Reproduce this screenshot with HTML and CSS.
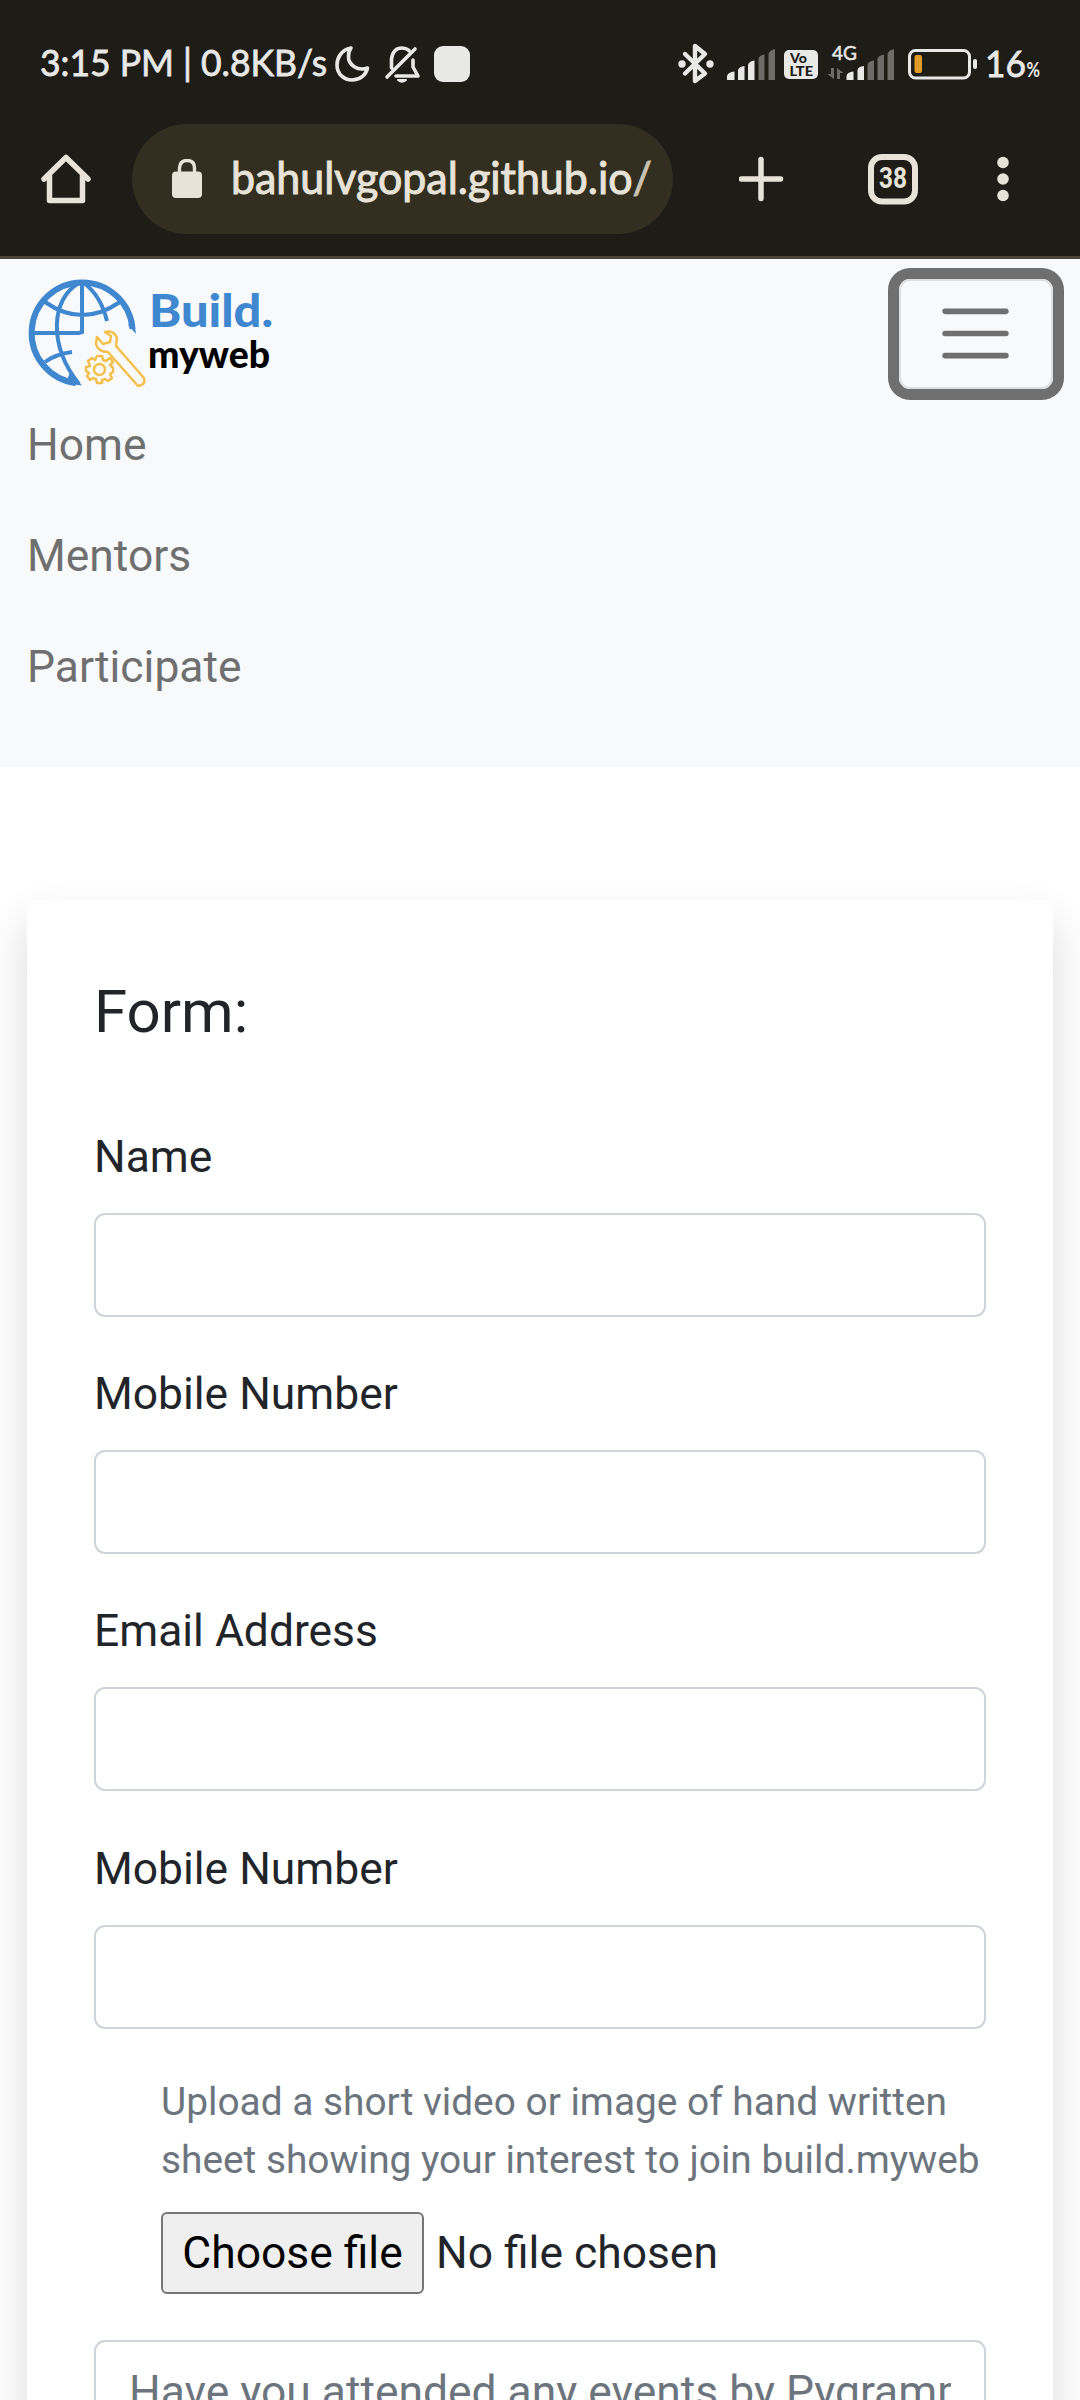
FILE: index.html
```html
<!DOCTYPE html>
<html lang="en">
<head>
<meta charset="utf-8">
<title>Build.myweb</title>
<link rel="stylesheet" href="styles.css">
</head>
<body>
<div class="chrome">
  <div class="status">
    <svg class="clock" width="290" height="50" viewBox="0 0 290 50">
      <text x="0" y="37" textLength="287" lengthAdjust="spacingAndGlyphs">3:15 PM | 0.8KB/s</text>
    </svg>
    <svg class="status-left" width="136" height="40" viewBox="335 44 136 40" fill="none" stroke="#e8e8e6" stroke-width="3.6" stroke-linejoin="round" stroke-linecap="round">
      <path d="M351 48C341 50 337 58 337 65C337 74 344 80 352 80C360 80 366 75 367.500 68C358 71.500 348 65 348.500 56Q348.500 51 351 48Z"/>
      <path d="M387 77L415 49M391.500 68V59Q393 48 402 48Q406 48 409 50.500M413 60V67L418 76H396" />
      <path d="M398 80H406Q402 83.500 398 80Z" stroke-width="2" fill="#e8e8e6"/>
      <rect x="434" y="46" width="36" height="36" rx="9" fill="#e8e8e6" stroke="none"/>
    </svg>
    <svg class="status-right" width="366" height="42" viewBox="678 43 366 42" fill="#e8e8e6">
      <path d="M685 54L705 73.500L695 81V46L705 54L685 73.500" fill="none" stroke="#e8e8e6" stroke-width="4.400" stroke-linejoin="round" stroke-linecap="round"/>
      <circle cx="682" cy="64" r="3.700"/><circle cx="710" cy="64" r="3.700"/>
      <path d="M727 76Q728 72 734.500 71.500V80H727ZM738 70Q739 66.500 744.500 66V80H738ZM748 65Q749 61 754.500 60.500V80H748Z"/>
      <path d="M758.500 59Q759 55.500 764.500 54.500V80H758.500ZM768.500 54Q769 50.500 775 49V80H768.500Z" fill="#6d6c68"/>
      <rect x="784" y="50" width="34" height="29" rx="5"/>
      <text class="volte" x="790" y="63" textLength="17" lengthAdjust="spacingAndGlyphs">Vo</text>
      <text class="volte" x="789.500" y="76" textLength="23.500" lengthAdjust="spacingAndGlyphs">LTE</text>
      <text class="net" x="832" y="60" textLength="25" lengthAdjust="spacingAndGlyphs">4G</text>
      <path d="M834 68V79L827.500 74H831V68ZM837 79V68L843.500 73H840V79Z" fill="#6d6c68"/>
      <path d="M846.500 76Q847 72 853.500 71.500V80H846.500ZM857.500 70Q858 66.500 864 66V80H857.500Z"/>
      <path d="M867.500 65Q868 61 874 60.500V80H867.500ZM877.500 59Q878 55.500 884 54.500V80H877.500ZM887.500 54Q888 50.500 894 49V80H887.500Z" fill="#6d6c68"/>
      <rect x="909.500" y="50.500" width="60" height="27.500" rx="6" fill="none" stroke="#e8e8e6" stroke-width="3"/>
      <rect x="914.500" y="55" width="7.500" height="18" rx="2" fill="#e09c26"/>
      <rect x="973" y="59" width="4" height="10" rx="2"/>
      <text class="pct" x="985" y="77" textLength="41" lengthAdjust="spacingAndGlyphs">16</text>
      <text class="pct-sign" x="1026.500" y="77" textLength="13.500" lengthAdjust="spacingAndGlyphs">%</text>
    </svg>
  </div>
  <div class="toolbar">
    <svg class="home" width="50" height="52" viewBox="41 153 50 52" fill="none" stroke="#e8e3d8" stroke-width="5.500" stroke-linecap="round" stroke-linejoin="round">
      <path d="M44 179L66 157.500L88 179M49.500 176V200.500H82.500V176"/>
    </svg>
    <div class="url">
      <svg width="30" height="40" viewBox="172 159 30 40">
        <rect x="172" y="171.500" width="30" height="26.500" rx="4" fill="#e8e3d8"/>
        <path d="M179.500 173V168Q180 160.500 187 160.500Q194.500 160.500 194.500 168V173" fill="none" stroke="#e8e3d8" stroke-width="3.400"/>
      </svg>
      <svg class="address" width="424" height="64" viewBox="0 0 424 64">
        <text x="0" y="47" textLength="421" lengthAdjust="spacingAndGlyphs">bahulvgopal.github.io<tspan class="slash">/</tspan></text>
      </svg>
    </div>
    <svg class="actions" width="270" height="52" viewBox="739 153 270 52" fill="none" stroke="#e8e3d8" stroke-width="5.500" stroke-linecap="round">
      <path d="M741.500 179H780.500M761 159.500V198.500"/>
      <rect x="871" y="157" width="44" height="44.500" rx="11" stroke-width="6"/>
      <text class="tabs" x="879" y="188" textLength="28" lengthAdjust="spacingAndGlyphs">38</text>
      <g fill="#e8e3d8" stroke="none"><circle cx="1003" cy="162.500" r="5.800"/><circle cx="1003" cy="179" r="5.800"/><circle cx="1003" cy="195.500" r="5.800"/></g>
    </svg>
  </div>
</div>
<nav class="navbar">
  <div class="brand-row">
    <svg class="logo" width="250" height="112" viewBox="27 277 250 112">
      <g fill="none" stroke="#3f87cf">
        <path d="M132.500 329A50.500 50.500 0 1 0 76 383" stroke-width="6"/>
        <path d="M82 283V332L79 333H33M79 283C51 299 48 345 79 384M84 283Q101 296 107 321M45 302Q82 328 120 302M45 362Q56 354 72 352" stroke-width="4"/>
        <path d="M128 325L136 334L134 320ZM70 372L82 385.500L66 383Z" fill="#3f87cf" stroke="none"/>
      </g>
      <g fill="none" stroke="#f3c04b" stroke-width="2.500" stroke-linejoin="round">
        <path d="M105 332Q114 330 117 338L116 346L144 378Q146 385 138 386L108 352Q98 352 96 344L97 337L103 344L110 342L111 336Z"/>
        <circle cx="99.500" cy="369.500" r="5.500"/>
        <path d="M97 356H102L103 360L106 361L110 358L113 362L110 365L113 368V372L110 374L112 378L108 381L105 379L102 380V383H97L96 379L93 378L90 380L87 376L89 373L86 371V367L90 366L88 361L92 358L95 360Z"/>
      </g>
      <text class="build" x="149" y="327" textLength="124" lengthAdjust="spacingAndGlyphs">Build.</text>
      <text class="myweb" x="148" y="368" textLength="122" lengthAdjust="spacingAndGlyphs">myweb</text>
    </svg>
    <button class="toggler" aria-label="Toggle navigation">
      <svg width="83" height="83" viewBox="0 0 30 30"><path d="M4 7h22M4 15h22M4 23h22" stroke="#6f6f6f" stroke-width="2" stroke-linecap="round"/></svg>
    </button>
  </div>
  <ul class="links"><li>Home</li><li>Mentors</li><li>Participate</li></ul>
</nav>
<main class="card">
  <h1>Form:</h1>
  <label class="field"><span>Name</span><input type="text"></label>
  <label class="field"><span>Mobile Number</span><input type="text"></label>
  <label class="field"><span>Email Address</span><input type="text"></label>
  <label class="field"><span>Mobile Number</span><input type="text"></label>
  <div class="upload">
    <p>Upload a short video or image of hand written<br>sheet showing your interest to join build.myweb</p>
    <div class="file"><button>Choose file</button><span>No file chosen</span></div>
  </div>
  <input class="last" type="text" placeholder="Have you attended any events by Pygrammers">
</main>
</body>
</html>
```
FILE: styles.css
```css
* { box-sizing: border-box; }
body {
  display: flex;
  flex-direction: column;
  margin: 0;
  height: 2400px;
  overflow: hidden;
  background: #fff;
  color: #212529;
  font: 44.4px/66px Roboto, sans-serif;
}
svg { display: block; flex: none; }
.chrome {
  flex: none;
  height: 259px;
  background: #1d1c17;
  border-bottom: 3px solid #4a463a;
}
.status {
  display: flex;
  align-items: center;
  height: 124px;
  padding: 4px 36px 0 40px;
}
.clock { margin-right: 5px; }
.clock text {
  font: 37px Lato, sans-serif;
  fill: #e8e8e6;
  stroke: #e8e8e6;
  stroke-width: .8px;
}
.status-right { margin-left: auto; }
.volte { font: 900 14px Lato, sans-serif; fill: #1d1c17; }
.net { font: 20px Lato, sans-serif; stroke: #e8e8e6; stroke-width: .5px; }
.pct { font: 37px Lato, sans-serif; stroke: #e8e8e6; stroke-width: .8px; }
.pct-sign { font: bold 21px Lato, sans-serif; }
.toolbar {
  display: flex;
  align-items: center;
  height: 110px;
  padding-left: 41px;
}
.url {
  display: flex;
  align-items: center;
  gap: 29px;
  width: 541px;
  height: 110px;
  margin-left: 41px;
  padding-left: 40px;
  border-radius: 55px;
  background: #322f20;
}
.address text {
  font: 44px Lato, sans-serif;
  fill: #e8e3d8;
  stroke: #e8e3d8;
  stroke-width: 1px;
}
.address .slash { fill: #c9c3b2; stroke: #c9c3b2; }
.actions { margin-left: 66px; }
.tabs { font: bold 29px Roboto, sans-serif; fill: #e8e3d8; stroke: none; }
.navbar {
  flex: none;
  height: 508px;
  padding: 18px 27px 0;
  background: #f8f9fb;
}
.brand-row {
  display: flex;
  justify-content: space-between;
  height: 135px;
}
.build {
  font: 900 46px Lato, sans-serif;
  fill: #3f87cf;
}
.myweb {
  font: 900 38px Lato, sans-serif;
  fill: #000;
}
.toggler {
  display: grid;
  place-items: center;
  width: 154px;
  height: 110px;
  margin-top: 2px;
  padding: 0 2px 2px 0;
  border: 2px solid #dedfe1;
  border-radius: 11px;
  background: none;
  box-shadow: 0 0 0 11px #6f6f6f;
}
.links {
  margin: 0;
  padding: 0;
  list-style: none;
  color: #6f6f6f;
}
.links li { height: 111px; line-height: 67px; }
.card {
  flex: 1 0 0;
  min-height: 0;
  margin: 133px 27px -100px;
  padding: 67px 67px 0;
  border-radius: 11px;
  background: #fff;
  box-shadow: 0 22px 44px rgba(0, 0, 0, .15);
}
h1 {
  margin: 0 0 54px;
  font-size: 60px;
  font-weight: 400;
  line-height: 90px;
}
.field {
  display: block;
  height: 237.2px;
}
.field span {
  display: block;
  height: 102px;
  padding-top: 13px;
}
input {
  display: block;
  width: 100%;
  height: 104px;
  padding: 0 33px;
  border: 2px solid #ced4da;
  border-radius: 11px;
  background: #fff;
  color: #212529;
  font: inherit;
}
input::placeholder { color: #6c757d; opacity: 1; }
.upload {
  height: 280px;
  padding-left: 67px;
}
.upload p {
  margin: 0 0 23px;
  padding-top: 13px;
  color: #6c757d;
  font-size: 38.85px;
  line-height: 58px;
  white-space: nowrap;
}
.file {
  display: flex;
  align-items: center;
  gap: 12px;
}
.file button {
  width: 263px;
  height: 82px;
  padding: 0;
  border: 2px solid #767676;
  border-radius: 6px;
  background: #efefef;
  color: #000;
  font: inherit;
}
```
